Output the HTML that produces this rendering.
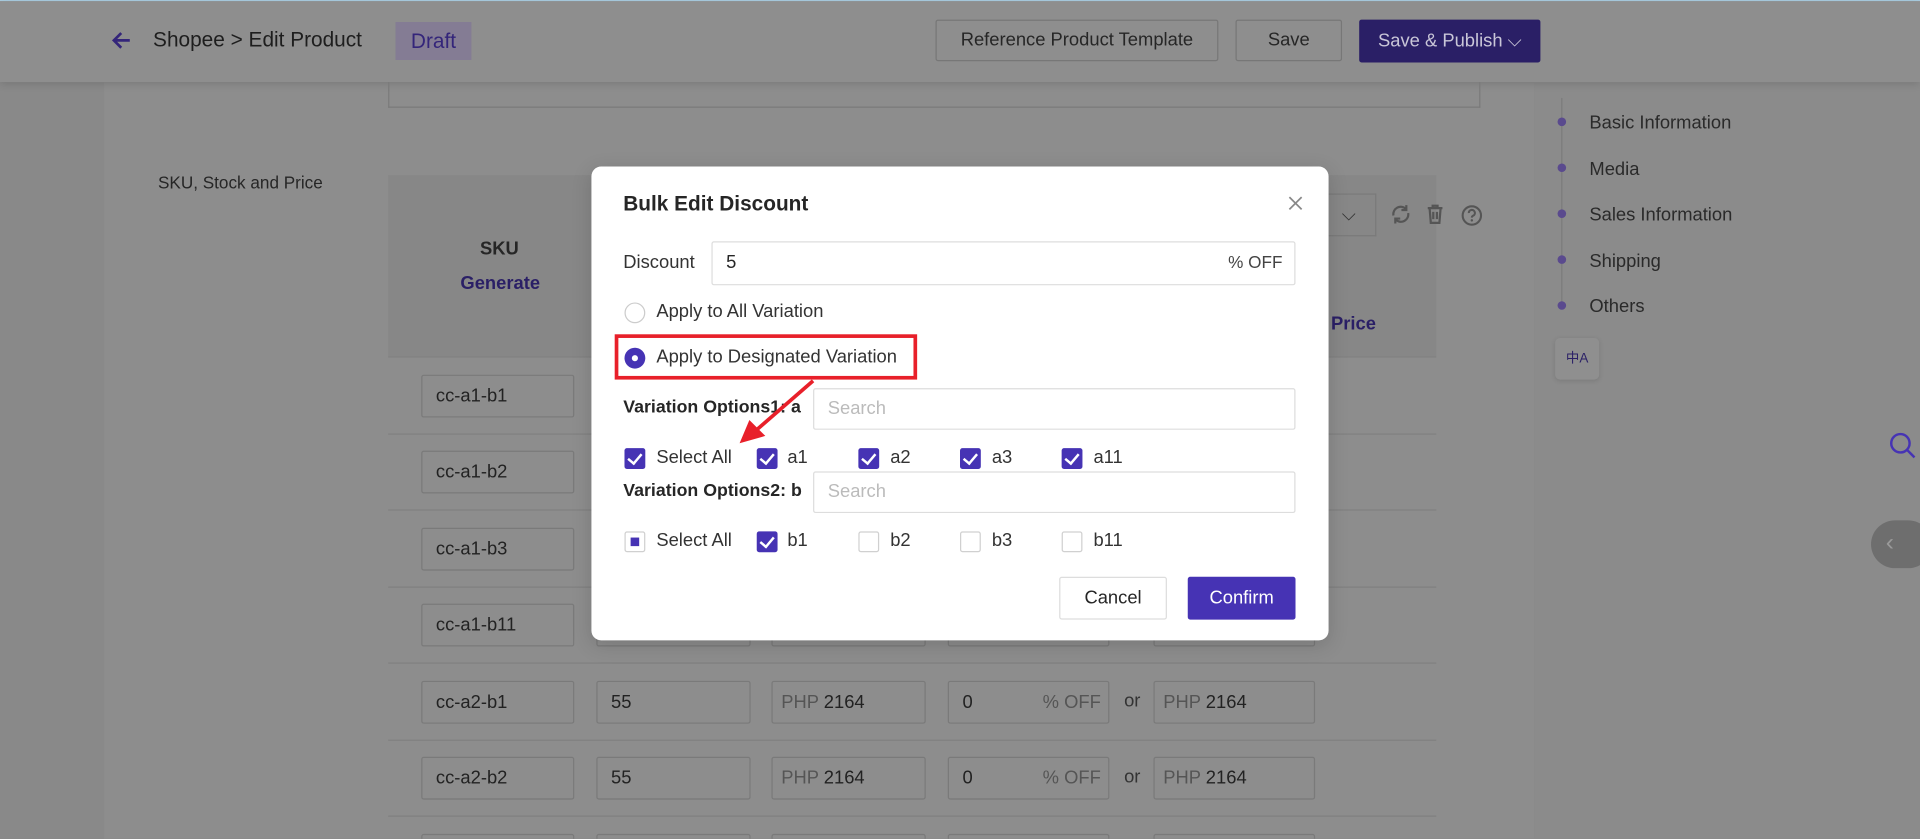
<!DOCTYPE html>
<html><head><meta charset="utf-8"><style>
*{box-sizing:border-box;margin:0;padding:0}
html,body{width:1920px;height:839px;overflow:hidden;background:#898989;font-family:"Liberation Sans",Arial,sans-serif}
#w{position:absolute;left:0;top:0;width:1568px;height:685px;transform:scale(1.22449);transform-origin:0 0;background:#898989;color:#262626;font-size:15px;overflow:hidden}
.a{position:absolute}
.in{position:absolute;border:1px solid #7a7a7a;border-radius:2px;height:35px;line-height:33px;padding-left:11px;font-size:15px;color:#222}
.g{color:#555}
.btn{position:absolute;border:1px solid #777;border-radius:2px;text-align:center;font-size:15px;color:#262626}
.cb{position:absolute;width:17px;height:17px;border-radius:2px}
.on{background:#4633b4}
.on:after{content:"";position:absolute;left:5px;top:2px;width:5px;height:9px;border:solid #fff;border-width:0 2px 2px 0;transform:rotate(40deg)}
.off{border:1px solid #d0d0d0;background:#fff}
.lb{position:absolute;font-size:15px;color:#333}
.sep{position:absolute;left:317px;width:856px;height:1px;background:#808080}
</style></head><body><div id="w">
<div class="a" style="left:0;top:0;width:1568px;height:1px;background:#a9cce0"></div>
<div class="a" style="left:85px;top:67px;width:1168px;height:618px;background:#8d8d8d"></div>
<div class="a" style="left:1253px;top:67px;width:315px;height:618px;background:#8b8b8b"></div>
<div class="a" style="left:0;top:1px;width:1568px;height:66px;background:#8e8e8e;box-shadow:0 2px 6px rgba(0,0,0,.12)"></div>
<svg class="a" style="left:90px;top:25px" width="18" height="16" viewBox="0 0 18 16"><path d="M16 8H3M9 2L3 8l6 6" stroke="#34257a" stroke-width="2.2" fill="none"/></svg>
<div class="a" style="left:125px;top:23px;font-size:17px;color:#1e1e1e">Shopee &gt; Edit Product</div>
<div class="a" style="left:323px;top:18px;width:62px;height:31px;background:#847c94;color:#34257a;font-size:17px;text-align:center;line-height:31px">Draft</div>
<div class="btn" style="left:764px;top:16px;width:231px;height:34px;line-height:32px">Reference Product Template</div>
<div class="btn" style="left:1009px;top:16px;width:87px;height:34px;line-height:32px">Save</div>
<div class="btn" style="left:1110px;top:16px;width:148px;height:35px;line-height:33px;background:#2a1f66;border-color:#2a1f66;color:#c9c6d8">Save &amp; Publish ⌵</div>
<div class="a" style="left:317px;top:67px;width:892px;height:21px;border:1px solid #7a7a7a;border-top:none"></div>
<div class="a" style="left:129px;top:141px;font-size:14px">SKU, Stock and Price</div>
<div class="a" style="left:317px;top:143px;width:856px;height:148px;background:#878787"></div>
<div class="a" style="left:392px;top:195px;font-size:15px;font-weight:bold">SKU</div>
<div class="a" style="left:376px;top:223px;font-size:15px;font-weight:bold;color:#2a1f66">Generate</div>
<div class="a" style="left:1087px;top:256px;font-size:15px;font-weight:bold;color:#2a1f66">Price</div>
<div class="a" style="left:1080px;top:158px;width:44px;height:35px;border:1px solid #7a7a7a;border-left:none;text-align:center;line-height:33px;color:#333">⌵</div>
<svg class="a" style="left:1135px;top:166px" width="18" height="18" viewBox="0 0 18 18"><path d="M3 10a6 6 0 0 1 10-5.5M15 8a6 6 0 0 1-10 5.5" stroke="#555" stroke-width="1.8" fill="none"/><path d="M13.5 1.5v4h-4M4.5 16.5v-4h4" stroke="#555" stroke-width="1.8" fill="none"/></svg>
<svg class="a" style="left:1164px;top:166px" width="16" height="18" viewBox="0 0 16 18"><path d="M2 4h12M6 4V2h4v2M3.5 4l1 12h7l1-12M6.5 7v6M9.5 7v6" stroke="#555" stroke-width="1.8" fill="none"/></svg>
<svg class="a" style="left:1193px;top:167px" width="18" height="18" viewBox="0 0 18 18"><circle cx="9" cy="9" r="7.5" stroke="#555" stroke-width="1.7" fill="none"/><path d="M6.5 7a2.5 2.5 0 1 1 3.3 2.3c-.6.3-.8.7-.8 1.4" stroke="#555" stroke-width="1.7" fill="none"/><circle cx="9" cy="13" r="1" fill="#555"/></svg>
<div class="sep" style="top:291px"></div><div class="sep" style="top:354px"></div><div class="sep" style="top:416px"></div><div class="sep" style="top:479px"></div><div class="sep" style="top:541px"></div><div class="sep" style="top:604px"></div><div class="sep" style="top:666px"></div>
<div class="in" style="left:344px;top:306px;width:125px">cc-a1-b1</div>
<div class="in" style="left:344px;top:368px;width:125px">cc-a1-b2</div>
<div class="in" style="left:344px;top:431px;width:125px">cc-a1-b3</div>
<div class="in" style="left:344px;top:493px;width:125px">cc-a1-b11</div>
<div class="in" style="left:344px;top:556px;width:125px">cc-a2-b1</div>
<div class="in" style="left:344px;top:618px;width:125px">cc-a2-b2</div>
<div class="in" style="left:344px;top:681px;width:125px"></div>
<div class="in" style="left:487px;top:556px;width:126px">55</div>
<div class="in" style="left:487px;top:618px;width:126px">55</div>
<div class="in" style="left:630px;top:556px;width:126px;padding-left:7px"><span class="g">PHP</span> 2164</div>
<div class="in" style="left:630px;top:618px;width:126px;padding-left:7px"><span class="g">PHP</span> 2164</div>
<div class="in" style="left:774px;top:556px;width:132px">0<span class="g" style="position:absolute;right:6px">% OFF</span></div>
<div class="in" style="left:774px;top:618px;width:132px">0<span class="g" style="position:absolute;right:6px">% OFF</span></div>
<div class="a" style="left:918px;top:564px;color:#333">or</div><div class="a" style="left:918px;top:626px;color:#333">or</div>
<div class="in" style="left:942px;top:556px;width:132px;padding-left:7px"><span class="g">PHP</span> 2164</div>
<div class="in" style="left:942px;top:618px;width:132px;padding-left:7px"><span class="g">PHP</span> 2164</div>
<div class="in" style="left:487px;top:493px;width:126px"></div><div class="in" style="left:630px;top:493px;width:126px"></div><div class="in" style="left:774px;top:493px;width:132px"></div><div class="in" style="left:942px;top:493px;width:132px"></div>
<div class="in" style="left:487px;top:681px;width:126px"></div><div class="in" style="left:630px;top:681px;width:126px"></div><div class="in" style="left:774px;top:681px;width:132px"></div><div class="in" style="left:942px;top:681px;width:132px"></div>
<div class="a" style="left:1275px;top:80px;width:1px;height:172px;background:#7a7a7a"></div>
<div class="a" style="left:1272px;top:96px;width:7px;height:7px;border-radius:50%;background:#5a4a8e;box-shadow:0 37.5px 0 #5a4a8e,0 75px 0 #5a4a8e,0 112.5px 0 #5a4a8e,0 150px 0 #5a4a8e"></div>
<div class="a" style="left:1298px;top:91px;color:#2a2a2a;line-height:20px">Basic Information</div>
<div class="a" style="left:1298px;top:129px;color:#2a2a2a;line-height:20px">Media</div>
<div class="a" style="left:1298px;top:166px;color:#2a2a2a;line-height:20px">Sales Information</div>
<div class="a" style="left:1298px;top:204px;color:#2a2a2a;line-height:20px">Shipping</div>
<div class="a" style="left:1298px;top:241px;color:#2a2a2a;line-height:20px">Others</div>
<div class="a" style="left:1270px;top:276px;width:36px;height:34px;background:#8f8f8f;border-radius:4px;box-shadow:0 1px 4px rgba(0,0,0,.12);color:#2a1f66;font-size:11px;text-align:center;line-height:34px;font-family:'Liberation Sans','Noto Sans CJK SC',sans-serif">中A</div>
<svg class="a" style="left:1542px;top:352px" width="24" height="24" viewBox="0 0 24 24"><circle cx="10" cy="10" r="7.5" stroke="#4633b4" stroke-width="2" fill="none"/><path d="M15.5 15.5l6 6" stroke="#4633b4" stroke-width="2"/></svg>
<div class="a" style="left:1528px;top:425px;width:50px;height:39px;border-radius:20px;background:#6e6e6e;color:#9a9a9a;font-size:20px;line-height:37px;padding-left:12px">‹</div>

<div class="a" style="left:483px;top:136px;width:602px;height:387px;background:#fff;border-radius:8px;box-shadow:0 4px 16px rgba(0,0,0,.15)"></div>
<div class="a" style="left:509px;top:157px;font-size:17px;font-weight:bold;color:#262626">Bulk Edit Discount</div>
<svg class="a" style="left:1052px;top:160px" width="12" height="12" viewBox="0 0 12 12"><path d="M1 1l10 10M11 1L1 11" stroke="#888" stroke-width="1.4"/></svg>
<div class="lb" style="left:509px;top:206px">Discount</div>
<div class="a" style="left:581px;top:197px;width:477px;height:36px;border:1px solid #ddd;border-radius:2px"></div>
<div class="lb" style="left:593px;top:206px;color:#262626">5</div>
<div class="lb" style="left:1003px;top:206px;color:#444;font-size:14px">% OFF</div>
<div class="a" style="left:510px;top:247px;width:17px;height:17px;border:1px solid #ccc;border-radius:50%"></div>
<div class="lb" style="left:536px;top:246px">Apply to All Variation</div>
<div class="a" style="left:502px;top:273px;width:247px;height:37px;border:3px solid #e8202a"></div>
<div class="a" style="left:510px;top:284px;width:17px;height:17px;border-radius:50%;background:#4633b4"><div style="position:absolute;left:6px;top:6px;width:5px;height:5px;border-radius:50%;background:#fff"></div></div>
<div class="lb" style="left:536px;top:283px">Apply to Designated Variation</div>
<div class="lb" style="left:509px;top:325px;font-weight:bold;color:#262626;font-size:14.5px">Variation Options1: a</div>
<div class="a" style="left:664px;top:317px;width:394px;height:34px;border:1px solid #ddd;border-radius:2px;padding-left:11px;line-height:32px;color:#bbb;font-size:15px">Search</div>
<div class="cb on" style="left:510px;top:366px"></div><div class="lb" style="left:536px;top:365px">Select All</div>
<div class="cb on" style="left:618px;top:366px"></div><div class="lb" style="left:643px;top:365px">a1</div>
<div class="cb on" style="left:701px;top:366px"></div><div class="lb" style="left:727px;top:365px">a2</div>
<div class="cb on" style="left:784px;top:366px"></div><div class="lb" style="left:810px;top:365px">a3</div>
<div class="cb on" style="left:867px;top:366px"></div><div class="lb" style="left:893px;top:365px">a11</div>
<div class="lb" style="left:509px;top:393px;font-weight:bold;color:#262626;font-size:14.5px">Variation Options2: b</div>
<div class="a" style="left:664px;top:385px;width:394px;height:34px;border:1px solid #ddd;border-radius:2px;padding-left:11px;line-height:32px;color:#bbb;font-size:15px">Search</div>
<div class="cb off" style="left:510px;top:434px"><div style="position:absolute;left:4px;top:4px;width:7px;height:7px;background:#4633b4"></div></div><div class="lb" style="left:536px;top:433px">Select All</div>
<div class="cb on" style="left:618px;top:434px"></div><div class="lb" style="left:643px;top:433px">b1</div>
<div class="cb off" style="left:701px;top:434px"></div><div class="lb" style="left:727px;top:433px">b2</div>
<div class="cb off" style="left:784px;top:434px"></div><div class="lb" style="left:810px;top:433px">b3</div>
<div class="cb off" style="left:867px;top:434px"></div><div class="lb" style="left:893px;top:433px">b11</div>
<div class="btn" style="left:865px;top:471px;width:88px;height:35px;line-height:33px;border-color:#ddd;background:#fff">Cancel</div>
<div class="btn" style="left:970px;top:471px;width:88px;height:35px;line-height:33px;border-color:#4633b4;background:#4633b4;color:#fff">Confirm</div>
<svg class="a" style="left:0;top:0" width="1568" height="685"><path d="M664 311L618 351" stroke="#e8202a" stroke-width="3"/><path d="M604 362L612 343L625 356Z" fill="#e8202a"/></svg>
</div></body></html>
